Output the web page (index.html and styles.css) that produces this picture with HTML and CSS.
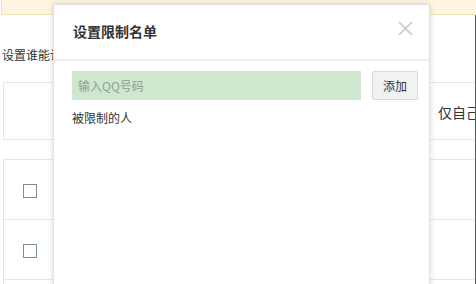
FILE: index.html
```html
<!DOCTYPE html>
<html>
<head>
<meta charset="utf-8">
<link rel="stylesheet" href="styles.css">
</head>
<body>
<div class="page">
  <div class="banner"></div>
  <div class="main">
    <div class="intro">设置谁能访问我的空间</div>
    <div class="table head">
      <div class="head-row">
        <div class="cell-left"></div>
        <div class="cell-right">仅自己可见</div>
      </div>
    </div>
    <div class="table rows">
      <div class="row"><span class="check"></span></div>
      <div class="row"><span class="check"></span></div>
      <div class="row"><span class="check"></span></div>
    </div>
  </div>
  <div class="modal">
    <div class="modal-head">
      <span class="modal-title">设置限制名单</span>
      <svg class="close" width="15" height="15" viewBox="0 0 15 15"><path d="M1 1 L14 14 M14 1 L1 14" stroke="#c9c9c9" stroke-width="1.6" fill="none"/></svg>
    </div>
    <div class="modal-body">
      <div class="add-line">
        <input class="qq" type="text" placeholder="输入QQ号码">
        <button class="add">添加</button>
      </div>
      <div class="label">被限制的人</div>
    </div>
  </div>
</div>
</body>
</html>
```

FILE: styles.css
```css
html, body {
  margin: 0;
  padding: 0;
  background: #fff;
  font-family: "Noto Sans CJK SC", "Noto Sans", sans-serif;
  color: #333;
  overflow: hidden;
}
.page {
  position: relative;
  width: 476px;
  height: 284px;
  overflow: hidden;
}
.banner {
  margin-left: 1px;
  width: 475px;
  height: 14px;
  background: #fdf5df;
  border-bottom: 1px solid #f1e2b9;
  border-left: 1px solid #f1e2b9;
  box-sizing: content-box;
}
.main {
  width: 475px;
  height: 269px;
  border-right: 1px solid #5a5a5a;
  overflow: hidden;
}
.intro {
  font-size: 12px;
  line-height: 16px;
  padding: 32px 0 0 2px;
  white-space: nowrap;
}
.table {
  margin-left: 3px;
  width: 560px;
  border-left: 1px solid #dfe9ec;
}
.head {
  margin-top: 19px;
  border-top: 1px solid #dfe9ec;
  border-bottom: 1px solid #dfe9ec;
}
.head-row {
  display: flex;
  height: 56px;
  align-items: center;
}
.cell-left {
  width: 434px;
}
.cell-right {
  font-size: 14px;
  white-space: nowrap;
  padding-top: 2px;
}
.rows {
  margin-top: 19px;
  border-top: 1px solid #dfe9ec;
}
.row {
  height: 59px;
  border-bottom: 1px solid #dfe9ec;
  display: flex;
  align-items: center;
  padding-left: 19px;
}
.check {
  width: 12px;
  height: 12px;
  border: 1px solid #7d8e8f;
  display: block;
  margin-top: 2px;
}
.modal {
  position: absolute;
  left: 53px;
  top: 4px;
  width: 377px;
  height: 320px;
  background: #fff;
  border: 1px solid #e2e2e2;
  box-sizing: border-box;
  box-shadow: 0 0 6px rgba(0,0,0,0.15);
}
.modal-head {
  position: relative;
  height: 54px;
  border-bottom: 2px solid #ededed;
  display: flex;
  align-items: center;
  padding-left: 19px;
}
.modal-title {
  font-size: 14px;
  font-weight: bold;
  color: #333;
  margin-top: -2px;
}
.close {
  position: absolute;
  right: 16px;
  top: 16px;
}
.modal-body {
  padding: 10px 0 0 18px;
}
.add-line {
  display: flex;
  align-items: center;
  gap: 11px;
}
.qq {
  width: 289px;
  height: 29px;
  box-sizing: border-box;
  background: #cde8cf;
  border: 1px solid #d6e2d7;
  padding: 0 0 0 5px;
  margin: 0;
  font-family: inherit;
  font-size: 12px;
  outline: none;
}
.qq::placeholder {
  color: #959c96;
}
.add {
  width: 46px;
  height: 29px;
  box-sizing: border-box;
  background: #f2f2f2;
  border: 1px solid #d9d9d9;
  border-radius: 2px;
  font-family: inherit;
  font-size: 12px;
  color: #333;
  padding: 0;
  margin: 0;
}
.label {
  font-size: 12px;
  line-height: 16px;
  margin-top: 10px;
}
```
